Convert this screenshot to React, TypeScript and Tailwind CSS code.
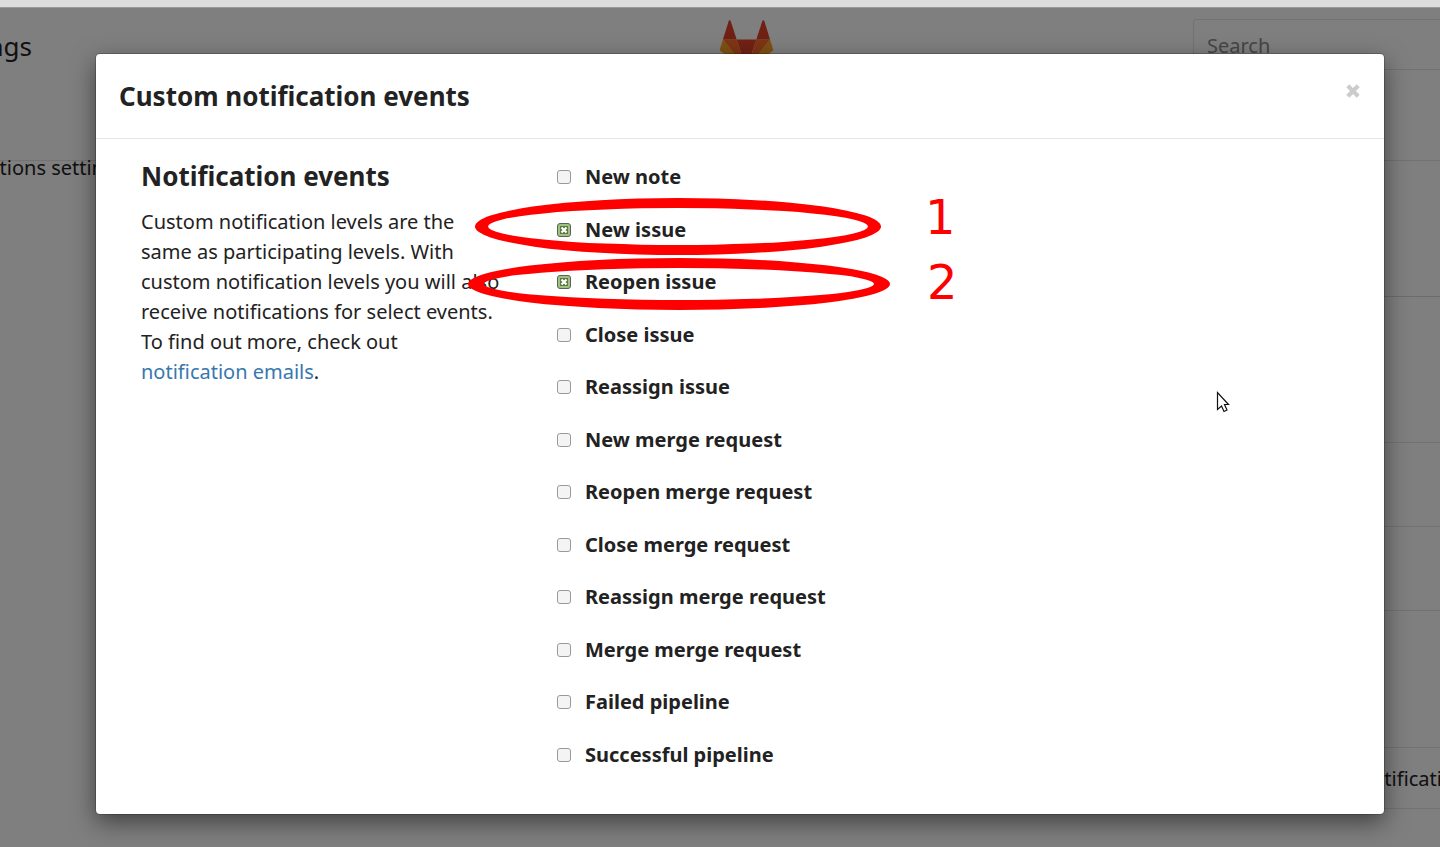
import { useState } from "react";

const EVENTS = [
  { id: "new_note", label: "New note", on: false },
  { id: "new_issue", label: "New issue", on: true },
  { id: "reopen_issue", label: "Reopen issue", on: true },
  { id: "close_issue", label: "Close issue", on: false },
  { id: "reassign_issue", label: "Reassign issue", on: false },
  { id: "new_merge_request", label: "New merge request", on: false },
  { id: "reopen_merge_request", label: "Reopen merge request", on: false },
  { id: "close_merge_request", label: "Close merge request", on: false },
  { id: "reassign_merge_request", label: "Reassign merge request", on: false },
  { id: "merge_merge_request", label: "Merge merge request", on: false },
  { id: "failed_pipeline", label: "Failed pipeline", on: false },
  { id: "success_pipeline", label: "Successful pipeline", on: false },
];

function Logo() {
  return (
    <svg className="mt-3 h-[50px] w-[53px]" viewBox="0 0 54 50" preserveAspectRatio="none" aria-hidden="true">
      <path fill="#e24329" d="M27 50 37 19.500H17z" />
      <path fill="#fc6d26" d="M27 50 17 19.500H3z" />
      <path fill="#fca326" d="M3 19.500 0 29a2 2 0 0 0 .8 2.300L27 50z" />
      <path fill="#e24329" d="M3 19.500h14L10.800.800c-.3-.9-1.600-.9-1.900 0z" />
      <path fill="#fc6d26" d="m27 50 10-30.500h14z" />
      <path fill="#fca326" d="m51 19.500 3 9.500a2 2 0 0 1-.8 2.300L27 50z" />
      <path fill="#e24329" d="M51 19.500H37L43.200.800c.3-.9 1.600-.9 1.900 0z" />
    </svg>
  );
}

function SettingsPage() {
  return (
    <div className="bg-white">
      <header className="grid h-[153px] grid-cols-[1fr_53px_1fr] items-start overflow-hidden border-b border-[#e5e5e5] pl-[53px]">
        <div className="-ml-[53px] flex h-[76px] w-8 items-center justify-end text-[26px] whitespace-nowrap">
          Settings
        </div>
        <Logo />
        <input
          type="text"
          aria-label="Search"
          placeholder="Search"
          className="mt-[11px] h-[51px] w-[247px] justify-self-end rounded-l border border-r-0 border-[#e5e5e5] bg-white px-[13px] pt-0.5 text-xl placeholder:text-[#8c8c8c]"
        />
      </header>
      <main className="text-xl whitespace-nowrap">
        <div className="flex h-[136px] items-start">
          <p className="-ml-[73px] leading-[14px]">Notifications settings</p>
          <div className="h-full flex-1 border-b border-[#d8d8d8]" />
        </div>
        <div className="ml-[30%]">
          <div className="h-[146px] border-b border-[#e5e5e5]" />
          <div className="h-[84px] border-b border-[#e5e5e5]" />
          <div className="h-[84px] border-b border-[#e5e5e5]" />
          <div className="h-[137px] border-b border-[#e5e5e5]" />
          <div className="flex h-[61px] items-center justify-end overflow-hidden border-b border-[#e5e5e5] pt-0.5">
            <p className="-mr-9">Custom notifications</p>
          </div>
          <div className="h-[38px]" />
        </div>
      </main>
    </div>
  );
}

function EventOption({ id, label, on }: { id: string; label: string; on: boolean }) {
  const [checked, setChecked] = useState(on);
  return (
    <li className="flex items-center gap-3.5">
      <span className="relative flex">
        <input
          id={id}
          type="checkbox"
          checked={checked}
          onChange={(e) => setChecked(e.target.checked)}
          className="size-3.5 appearance-none rounded-[3px] border border-[#999] bg-[#f4f4f4] checked:border-[#5c5f5a] checked:bg-[#a0c27c]"
        />
        {checked && (
          <svg className="pointer-events-none absolute inset-0 size-3.5" viewBox="0 0 14 14" aria-hidden="true">
            <rect x="3" y="3" width="8" height="8" fill="#5f7549" />
            <path d="M4.500 4.500l5 5M9.500 4.500l-5 5" stroke="#fff" strokeWidth="2.200" />
          </svg>
        )}
      </span>
      <label htmlFor={id} className="text-xl font-bold">
        {label}
      </label>
    </li>
  );
}

function Annotations() {
  return (
    <svg className="pointer-events-none absolute top-0 left-0 h-[400px] w-[1180px]" viewBox="0 0 1180 400" fill="#f00">
      <path
        fillRule="evenodd"
        d="M379 172.500a203 28.500 0 1 0 406 0a203 28.500 0 1 0-406 0zM392 172.500a190 18.500 0 1 0 380 0a190 18.500 0 1 0-380 0z"
      />
      <path
        fillRule="evenodd"
        d="M372 230a211 26 0 1 0 422 0a211 26 0 1 0-422 0zM388 230a195 16 0 1 0 390 0a195 16 0 1 0-390 0z"
      />
      <text x="829" y="180" fontFamily="DejaVu Sans" fontSize="48">
        1
      </text>
      <text x="831" y="245" fontFamily="DejaVu Sans" fontSize="48">
        2
      </text>
      <path
        d="M1121.500 338.500v17l4-3.500 2.500 5.500 3-1.500-2.500-5.500h4z"
        fill="#fff"
        stroke="#111"
        strokeWidth="1.200"
      />
    </svg>
  );
}

export default function App() {
  return (
    <div className="min-h-screen overflow-hidden bg-white font-['Noto_Sans',sans-serif] text-[#222]">
      <div className="h-2 border-b border-[#999] bg-[#dcdcdc]" />
      <div className="relative">
        <SettingsPage />
        <div className="absolute inset-0 flex items-start bg-black/50 pt-[46px] pr-14 pl-24">
          <section
            role="dialog"
            aria-labelledby="dialog-title"
            className="relative min-w-0 flex-1 rounded bg-white shadow-[0_0_0_1px_rgba(0,0,0,0.2),0_8px_24px_rgba(0,0,0,0.5)]"
          >
            <header className="flex h-[85px] items-start justify-between border-b border-[#e5e5e5] px-[23px] pt-6">
              <h2 id="dialog-title" className="text-[26px] leading-9 font-bold">
                Custom notification events
              </h2>
              <button type="button" aria-label="Close" className="mt-[5px] flex text-[#ccc]">
                <svg className="size-4" viewBox="0 0 16 16" aria-hidden="true">
                  <path d="M2.800 2.800l10.400 10.400M13.200 2.800 2.800 13.200" stroke="currentColor" strokeWidth="4.200" />
                </svg>
              </button>
            </header>
            <div className="flex gap-12 pt-3 pb-[33px] pl-[45px]">
              <div className="w-[368px] shrink-0 pt-2">
                <h3 className="text-[26px] leading-[34px] font-bold">Notification events</h3>
                <p className="mt-3.5 text-xl leading-[30px]">
                  Custom notification levels are the same as participating levels. With custom notification levels you
                  will also receive notifications for select events. To find out more, check out{" "}
                  <a href="#notification-emails" className="text-[#3777b0]">
                    notification emails
                  </a>
                  .
                </p>
              </div>
              <ul className="grid h-[630px] grid-rows-12">
                {EVENTS.map((event) => (
                  <EventOption key={event.id} {...event} />
                ))}
              </ul>
            </div>
            <Annotations />
          </section>
        </div>
      </div>
    </div>
  );
}
